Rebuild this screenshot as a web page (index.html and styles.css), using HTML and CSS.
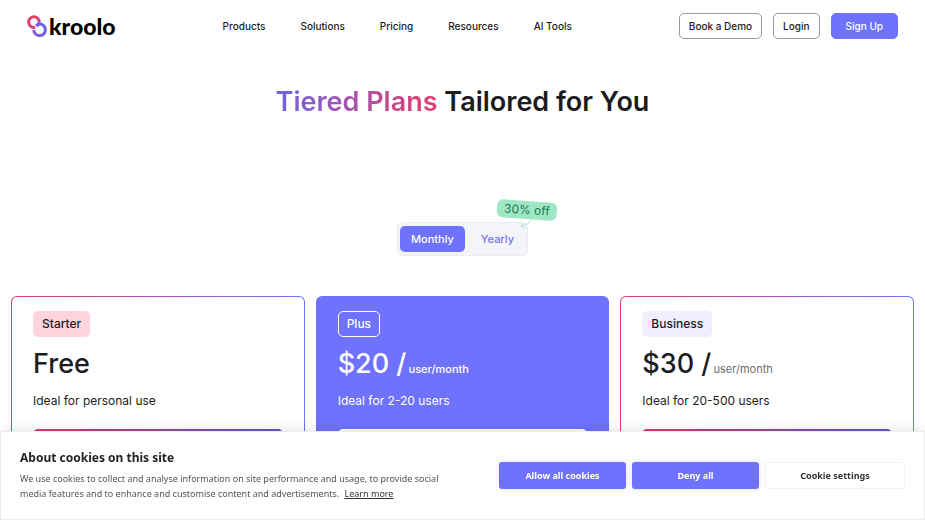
FILE: index.html
```html
<!DOCTYPE html>
<html lang="en">
<head>
    <meta charset="UTF-8">
    <meta name="viewport" content="width=device-width, initial-scale=1.0">
    <title>Kroolo Pricing</title>
    <link rel="stylesheet" href="styles.css">
</head>
<body>
    <header class="header">
        <a href="#" class="logo">
            <svg class="logo-mark" width="20" height="22" viewBox="0 0 20 22" fill="none" stroke-width="3" aria-hidden="true">
                <defs>
                    <linearGradient id="ringPink" x1="0" y1="0" x2="1" y2="1">
                        <stop offset="0" stop-color="#f0405f"/>
                        <stop offset="1" stop-color="#c04a9c"/>
                    </linearGradient>
                    <linearGradient id="ringBlue" x1="0" y1="1" x2="1" y2="0">
                        <stop offset="0" stop-color="#8a5cd0"/>
                        <stop offset="1" stop-color="#5f66f0"/>
                    </linearGradient>
                </defs>
                <path d="M8.2 12.3A5.3 5.3 0 1 1 12.2 7.6Q12 9.6 9.8 11" stroke="url(#ringPink)"/>
                <path d="M9 10.6Q10.6 9 12.6 9A5.8 5.8 0 1 1 6.8 14.9" stroke="url(#ringBlue)"/>
            </svg>
            <span class="logo-text">kroolo</span>
        </a>

        <nav class="nav">
            <a href="#">Products</a>
            <a href="#">Solutions</a>
            <a href="#">Pricing</a>
            <a href="#">Resources</a>
            <a href="#">AI Tools</a>
        </nav>

        <div class="actions">
            <button class="btn">Book a Demo</button>
            <button class="btn">Login</button>
            <button class="btn btn-primary">Sign Up</button>
        </div>
    </header>

    <main>
        <h1 class="title"><span class="title-accent">Tiered Plans</span> Tailored for You</h1>

        <div class="billing">
            <button class="billing-option active">Monthly</button>
            <button class="billing-option">Yearly</button>
            <span class="discount">30% off</span>
            <svg class="discount-arrow" width="16" height="12" viewBox="0 0 16 12" fill="none" stroke="#b5e4d0" aria-hidden="true">
                <path d="M13 1C11 5 7 7 2 8M5 5L2 8L6 10"/>
            </svg>
        </div>

        <section class="plans">
            <article class="plan">
                <span class="badge badge-pink">Starter</span>
                <p class="price">Free</p>
                <p class="ideal">Ideal for personal use</p>
                <button class="plan-btn" aria-label="Choose Starter"></button>
            </article>
            <article class="plan plan-featured">
                <span class="badge badge-outline">Plus</span>
                <p class="price">$20 / <span class="per">user/month</span></p>
                <p class="ideal">Ideal for 2-20 users</p>
                <button class="plan-btn" aria-label="Choose Plus"></button>
            </article>
            <article class="plan">
                <span class="badge badge-lilac">Business</span>
                <p class="price">$30 / <span class="per">user/month</span></p>
                <p class="ideal">Ideal for 20-500 users</p>
                <button class="plan-btn" aria-label="Choose Business"></button>
            </article>
        </section>
    </main>

    <div class="cookies" role="dialog" aria-labelledby="cookiesTitle">
        <div class="cookies-info">
            <h2 id="cookiesTitle">About cookies on this site</h2>
            <p>We use cookies to collect and analyse information on site performance and usage, to provide social media features and to enhance and customise content and advertisements. <a href="#">Learn more</a></p>
        </div>
        <div class="cookies-actions">
            <button class="cookie-btn">Allow all cookies</button>
            <button class="cookie-btn">Deny all</button>
            <button class="cookie-btn cookie-settings">Cookie settings</button>
        </div>
    </div>
</body>
</html>
```
FILE: styles.css
```css
:root {
    --primary: #6f72fc;
    --pink: #e43d6b;
    --text: #1c1c1e;
}

* {
    box-sizing: border-box;
}

body {
    font-family: Inter, "Liberation Sans", sans-serif;
    margin: 0;
    color: var(--text);
    background: white;
}

a {
    color: inherit;
    text-decoration: none;
}

button {
    font-family: inherit;
    cursor: pointer;
}

.header {
    display: flex;
    align-items: center;
    justify-content: space-between;
    padding: 13px 27px 0;
}

.logo {
    display: flex;
    align-items: center;
    gap: 2px;
}

.logo-text {
    font-family: Lato, sans-serif;
    font-size: 23px;
    font-weight: 900;
    line-height: 24px;
    color: black;
}

.nav {
    display: flex;
    gap: 35px;
    font-size: 10px;
    font-weight: 500;
}

.actions {
    display: flex;
    align-items: center;
    gap: 11px;
}

.btn {
    height: 26px;
    padding: 0 9px;
    font-size: 10px;
    font-weight: 500;
    color: var(--text);
    background: white;
    border: 1px solid #999;
    border-radius: 5px;
}

.btn-primary {
    padding: 0 14px;
    color: white;
    background: var(--primary);
    border-color: var(--primary);
}

.title {
    margin: 45px 0 0;
    font-size: 27px;
    font-weight: 600;
    line-height: 36px;
    text-align: center;
}

.title-accent {
    color: transparent;
    background: linear-gradient(90deg, #7165e3, var(--pink));
    background-clip: text;
    -webkit-background-clip: text;
}

.billing {
    position: relative;
    display: flex;
    gap: 5px;
    width: fit-content;
    margin: 102px auto 40px;
    padding: 3px 2px;
    background: #f4f5f9;
    border: 1px solid #eceef2;
    border-radius: 5px;
}

.billing-option {
    height: 26px;
    padding: 0 11px;
    font-size: 11px;
    font-weight: 500;
    color: var(--primary);
    background: none;
    border: none;
    border-radius: 5px;
}

.billing-option.active {
    color: white;
    background: var(--primary);
}

/* tilted sticker over the corner of the switch */
.discount {
    position: absolute;
    top: -22px;
    right: -30px;
    padding: 0 7px;
    font-size: 12px;
    line-height: 18px;
    color: #217a50;
    background: #9fe7c4;
    border-radius: 6px;
    transform: rotate(4deg);
}

.discount-arrow {
    position: absolute;
    top: -5px;
    right: -8px;
}

.plans {
    display: grid;
    grid-template-columns: repeat(3, 1fr);
    gap: 11px;
    padding: 0 11px;
}

.plan {
    padding: 14px 21px 20px;
    border: 1px solid transparent;
    border-radius: 6px;
    background: linear-gradient(white, white) padding-box,
                linear-gradient(90deg, var(--pink), var(--primary)) border-box;
}

.plan-featured {
    color: white;
    background: var(--primary);
}

.badge {
    display: inline-block;
    padding: 0 8px;
    font-size: 12px;
    font-weight: 500;
    line-height: 24px;
    border: 1px solid transparent;
    border-radius: 5px;
}

.badge-pink {
    background: #ffd4dc;
}

.badge-outline {
    border-color: white;
}

.badge-lilac {
    background: #f1efff;
}

.price {
    margin: 9px 0 0;
    font-size: 27px;
    font-weight: 500;
    line-height: 36px;
}

.per {
    margin-left: -5px;
    font-size: 11px;
    font-weight: 400;
    line-height: 11px;
    color: #6c6c74;
}

.plan-featured .per {
    font-weight: 500;
    color: white;
}

.ideal {
    margin: 10px 0 20px;
    font-size: 12px;
    line-height: 17px;
}

.plan-btn {
    display: block;
    width: 100%;
    height: 36px;
    background: linear-gradient(90deg, #d93a62, #5b57cf);
    border: none;
    border-radius: 5px;
}

.plan-featured .plan-btn {
    background: white;
}

.cookies {
    position: fixed;
    left: 0;
    right: 0;
    bottom: 0;
    display: flex;
    align-items: center;
    justify-content: space-between;
    gap: 38px;
    padding: 17px 19px 18px;
    font-family: "Noto Sans", sans-serif;
    background: white;
    border: 1px solid #ececec;
    box-shadow: 0 0 12px rgba(0, 0, 0, 0.12);
}

.cookies h2 {
    margin: 0 0 4px;
    font-size: 12px;
    line-height: 18px;
    color: #222;
}

.cookies p {
    margin: 0;
    font-size: 9px;
    line-height: 15px;
    color: #555;
}

.cookies p a {
    margin-left: 3px;
    color: #333;
    text-decoration: underline;
}

.cookies-actions {
    display: flex;
    flex-shrink: 0;
    gap: 6px;
}

.cookie-btn {
    width: 127px;
    height: 27px;
    padding: 0;
    font-size: 9px;
    font-weight: 700;
    color: white;
    background: var(--primary);
    border: none;
    border-radius: 3px;
    box-shadow: 0 0 5px rgba(0, 0, 0, 0.12);
}

.cookie-settings {
    width: 140px;
    color: #333;
    background: white;
    border: 1px solid #f2f2f2;
    box-shadow: none;
}
```
